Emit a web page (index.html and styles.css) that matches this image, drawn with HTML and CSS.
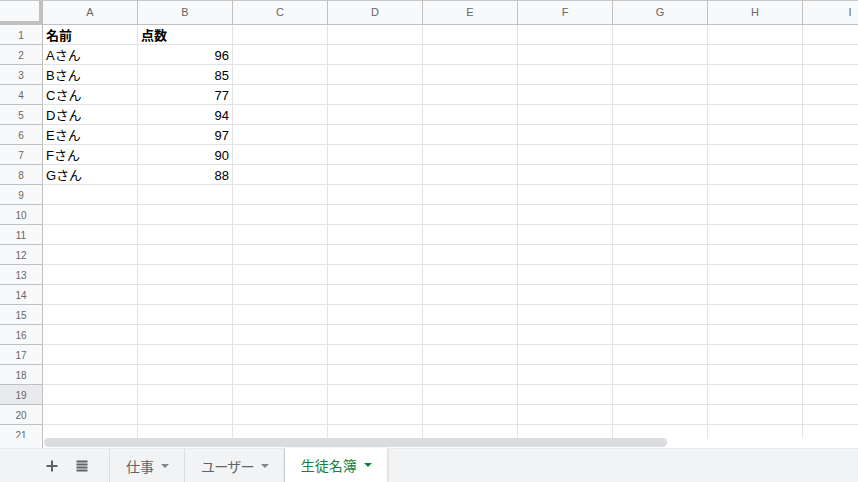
FILE: index.html
```html
<!DOCTYPE html>
<html lang="ja">
<head>
<meta charset="utf-8">
<title>生徒名簿</title>
<link rel="stylesheet" href="styles.css">
</head>
<body>
<div class="app">
  <div class="grid">
    <div class="row hrow">
      <div class="corner"></div>
      <div class="ch">A</div><div class="ch">B</div><div class="ch">C</div><div class="ch">D</div><div class="ch">E</div><div class="ch">F</div><div class="ch">G</div><div class="ch">H</div><div class="ch">I</div>
    </div>
    <div class="row"><div class="rh">1</div><div class="cell b">名前</div><div class="cell b">点数</div><div class="cell"></div><div class="cell"></div><div class="cell"></div><div class="cell"></div><div class="cell"></div><div class="cell"></div><div class="cell"></div></div>
    <div class="row"><div class="rh">2</div><div class="cell">Aさん</div><div class="cell num">96</div><div class="cell"></div><div class="cell"></div><div class="cell"></div><div class="cell"></div><div class="cell"></div><div class="cell"></div><div class="cell"></div></div>
    <div class="row"><div class="rh">3</div><div class="cell">Bさん</div><div class="cell num">85</div><div class="cell"></div><div class="cell"></div><div class="cell"></div><div class="cell"></div><div class="cell"></div><div class="cell"></div><div class="cell"></div></div>
    <div class="row"><div class="rh">4</div><div class="cell">Cさん</div><div class="cell num">77</div><div class="cell"></div><div class="cell"></div><div class="cell"></div><div class="cell"></div><div class="cell"></div><div class="cell"></div><div class="cell"></div></div>
    <div class="row"><div class="rh">5</div><div class="cell">Dさん</div><div class="cell num">94</div><div class="cell"></div><div class="cell"></div><div class="cell"></div><div class="cell"></div><div class="cell"></div><div class="cell"></div><div class="cell"></div></div>
    <div class="row"><div class="rh">6</div><div class="cell">Eさん</div><div class="cell num">97</div><div class="cell"></div><div class="cell"></div><div class="cell"></div><div class="cell"></div><div class="cell"></div><div class="cell"></div><div class="cell"></div></div>
    <div class="row"><div class="rh">7</div><div class="cell">Fさん</div><div class="cell num">90</div><div class="cell"></div><div class="cell"></div><div class="cell"></div><div class="cell"></div><div class="cell"></div><div class="cell"></div><div class="cell"></div></div>
    <div class="row"><div class="rh">8</div><div class="cell">Gさん</div><div class="cell num">88</div><div class="cell"></div><div class="cell"></div><div class="cell"></div><div class="cell"></div><div class="cell"></div><div class="cell"></div><div class="cell"></div></div>
    <div class="row"><div class="rh">9</div><div class="cell"></div><div class="cell"></div><div class="cell"></div><div class="cell"></div><div class="cell"></div><div class="cell"></div><div class="cell"></div><div class="cell"></div><div class="cell"></div></div>
    <div class="row"><div class="rh">10</div><div class="cell"></div><div class="cell"></div><div class="cell"></div><div class="cell"></div><div class="cell"></div><div class="cell"></div><div class="cell"></div><div class="cell"></div><div class="cell"></div></div>
    <div class="row"><div class="rh">11</div><div class="cell"></div><div class="cell"></div><div class="cell"></div><div class="cell"></div><div class="cell"></div><div class="cell"></div><div class="cell"></div><div class="cell"></div><div class="cell"></div></div>
    <div class="row"><div class="rh">12</div><div class="cell"></div><div class="cell"></div><div class="cell"></div><div class="cell"></div><div class="cell"></div><div class="cell"></div><div class="cell"></div><div class="cell"></div><div class="cell"></div></div>
    <div class="row"><div class="rh">13</div><div class="cell"></div><div class="cell"></div><div class="cell"></div><div class="cell"></div><div class="cell"></div><div class="cell"></div><div class="cell"></div><div class="cell"></div><div class="cell"></div></div>
    <div class="row"><div class="rh">14</div><div class="cell"></div><div class="cell"></div><div class="cell"></div><div class="cell"></div><div class="cell"></div><div class="cell"></div><div class="cell"></div><div class="cell"></div><div class="cell"></div></div>
    <div class="row"><div class="rh">15</div><div class="cell"></div><div class="cell"></div><div class="cell"></div><div class="cell"></div><div class="cell"></div><div class="cell"></div><div class="cell"></div><div class="cell"></div><div class="cell"></div></div>
    <div class="row"><div class="rh">16</div><div class="cell"></div><div class="cell"></div><div class="cell"></div><div class="cell"></div><div class="cell"></div><div class="cell"></div><div class="cell"></div><div class="cell"></div><div class="cell"></div></div>
    <div class="row"><div class="rh">17</div><div class="cell"></div><div class="cell"></div><div class="cell"></div><div class="cell"></div><div class="cell"></div><div class="cell"></div><div class="cell"></div><div class="cell"></div><div class="cell"></div></div>
    <div class="row"><div class="rh">18</div><div class="cell"></div><div class="cell"></div><div class="cell"></div><div class="cell"></div><div class="cell"></div><div class="cell"></div><div class="cell"></div><div class="cell"></div><div class="cell"></div></div>
    <div class="row"><div class="rh sel">19</div><div class="cell"></div><div class="cell"></div><div class="cell"></div><div class="cell"></div><div class="cell"></div><div class="cell"></div><div class="cell"></div><div class="cell"></div><div class="cell"></div></div>
    <div class="row"><div class="rh">20</div><div class="cell"></div><div class="cell"></div><div class="cell"></div><div class="cell"></div><div class="cell"></div><div class="cell"></div><div class="cell"></div><div class="cell"></div><div class="cell"></div></div>
    <div class="row"><div class="rh">21</div><div class="cell"></div><div class="cell"></div><div class="cell"></div><div class="cell"></div><div class="cell"></div><div class="cell"></div><div class="cell"></div><div class="cell"></div><div class="cell"></div></div>
  </div>
  <div class="hscroll">
    <div class="hscroll-corner"></div>
    <div class="hscroll-track"><div class="hscroll-thumb"></div></div>
  </div>
  <div class="tabbar">
    <div class="tools">
      <div class="tool">
        <svg width="12" height="12" viewBox="0 0 12 12"><path d="M6 0.5v11M0.5 6h11" stroke="#5f6368" stroke-width="2" fill="none"/></svg>
      </div>
      <div class="tool">
        <svg width="12" height="12" viewBox="0 0 12 12"><path d="M0.5 1.5h11M0.5 4.5h11M0.5 7.5h11M0.5 10.5h11" stroke="#5f6368" stroke-width="2" fill="none"/></svg>
      </div>
    </div>
    <div class="tab"><span>仕事</span><span class="arrow"></span></div>
    <div class="tab"><span class="tight">ユーザー</span><span class="arrow"></span></div>
    <div class="tab active"><span>生徒名簿</span><span class="arrow"></span></div>
  </div>
</div>
</body>
</html>
```
FILE: styles.css
```css
* { box-sizing: border-box; }
html, body { margin: 0; padding: 0; }
body {
  width: 858px;
  height: 482px;
  overflow: hidden;
  background: #fff;
  font-family: "Liberation Sans", Arial, "Noto Sans CJK JP", sans-serif;
  color: #000;
}
.app {
  display: flex;
  flex-direction: column;
  height: 482px;
}
.grid {
  height: 438px;
  flex: none;
  overflow: hidden;
}
.row {
  display: flex;
  height: 20px;
}
.hrow {
  height: 25px;
  border-top: 1px solid #c7c7c7;
}
.corner {
  flex: none;
  width: 43px;
  height: 24px;
  background: #f8f9fa;
  border-right: 4px solid #c0c0c0;
  border-bottom: 4px solid #c0c0c0;
}
.ch {
  flex: none;
  width: 95px;
  height: 24px;
  background: #f8f9fa;
  border-right: 1px solid #c0c0c0;
  border-bottom: 1px solid #c0c0c0;
  color: #666;
  font-size: 11px;
  line-height: 23px;
  text-align: center;
}
.rh {
  flex: none;
  width: 43px;
  height: 20px;
  background: #f8f9fa;
  border-right: 1px solid #c0c0c0;
  border-bottom: 1px solid #c0c0c0;
  color: #666;
  font-size: 10px;
  line-height: 19px;
  padding-top: 1px;
  text-align: center;
}
.rh.sel {
  background: #e8eaed;
}
.cell {
  flex: none;
  width: 95px;
  height: 20px;
  border-right: 1px solid #e2e3e3;
  border-bottom: 1px solid #e2e3e3;
  padding: 1px 3px 0;
  font-size: 13px;
  line-height: 19px;
  white-space: nowrap;
  overflow: hidden;
}
.cell.b { font-weight: bold; }
.cell.num { text-align: right; }

.hscroll {
  flex: none;
  display: flex;
  height: 10px;
}
.hscroll-corner {
  width: 43px;
  background: #f8f9fa;
  border-right: 1px solid #c0c0c0;
}
.hscroll-track {
  flex: 1;
  padding: 0 0 1px 1px;
  background: #fff;
}
.hscroll-thumb {
  width: 623px;
  height: 9px;
  background: #dadce0;
  border-radius: 5px;
}

.tabbar {
  flex: none;
  height: 34px;
  display: flex;
  background: #f1f3f4;
  border-top: 1px solid #e8eaed;
}
.tools {
  width: 110px;
  display: flex;
  align-items: center;
  gap: 6px;
  padding-left: 40px;
  border-right: 1px solid #dadce0;
}
.tool {
  width: 24px;
  height: 24px;
  display: flex;
  align-items: center;
  justify-content: center;
}
.tab {
  display: flex;
  align-items: center;
  gap: 7px;
  padding: 0 15px 0 16px;
  font-size: 14px;
  color: #5f6368;
  border-right: 1px solid #dadce0;
  font-family: "Noto Sans CJK JP", sans-serif;
}
.tight {
  letter-spacing: -0.75px;
}
.tab.active {
  background: #fff;
  color: #188038;
  border-right: none;
  margin-top: -1px;
  padding: 0 15px 0 16px;
  box-shadow: 0 1px 3px rgba(60, 64, 67, 0.25);
}
.arrow {
  width: 0;
  height: 0;
  border-left: 4px solid transparent;
  border-right: 4px solid transparent;
  border-top: 4px solid #80868b;
}
.tab.active .arrow {
  border-top-color: #188038;
}
```
